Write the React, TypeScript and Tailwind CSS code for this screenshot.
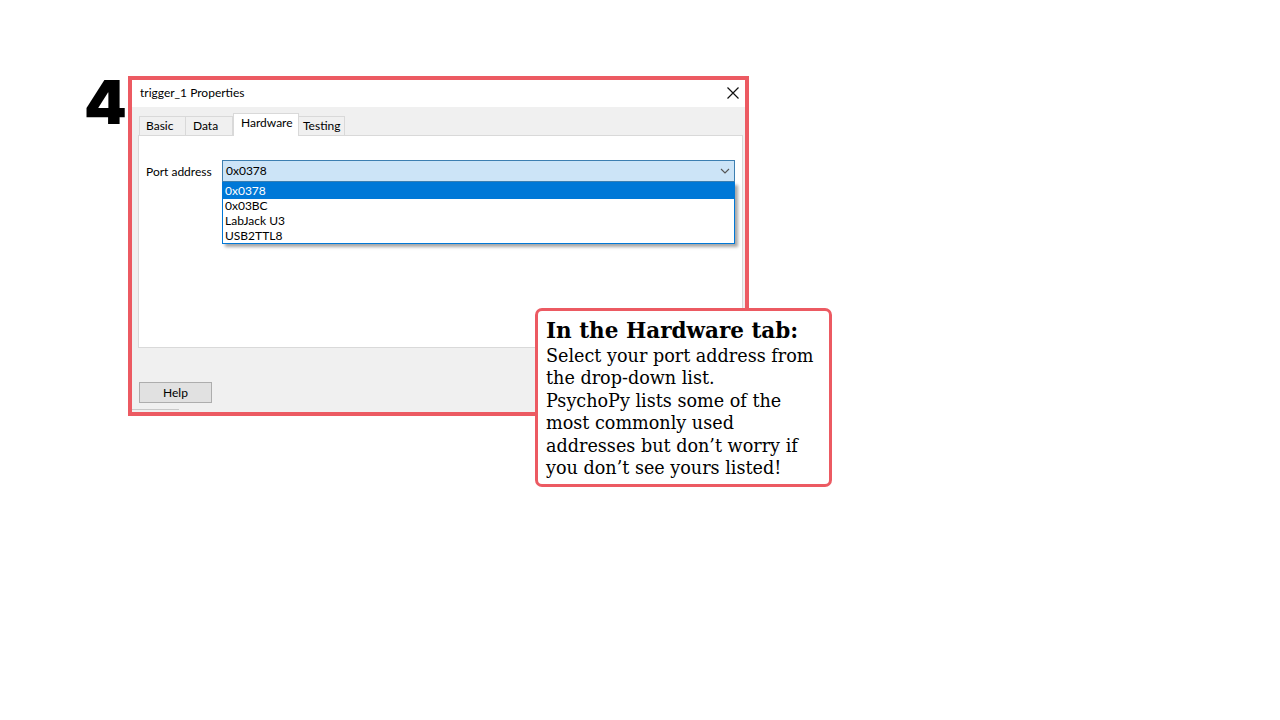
import React from "react";

const ui = { fontFamily: 'Lato, "Noto Sans", sans-serif' };
const slab = { fontFamily: '"DejaVu Serif", "Liberation Serif", serif' };

export default function App() {
  return (
    <div className="relative w-[1280px] h-[720px] bg-white overflow-hidden">
      <div className="flex items-start pl-[84px] pt-[76px]">
        <div
          className="w-[44px] -mt-[4px] text-[61px] leading-none font-black text-black"
          style={{ fontFamily: 'Inter, "DejaVu Sans", sans-serif' }}
        >
          4
        </div>
        <div className="w-[621px] h-[340px] border-[4px] border-[#ec5a62] flex flex-col" style={ui}>
          {/* title bar */}
          <div className="h-[27px] bg-white flex items-center justify-between pl-[8px] pr-[4px] shrink-0">
            <span className="text-[12px] text-black -mt-[2px]">trigger_1 Properties</span>
            <svg width="14" height="14" viewBox="0 0 14 14" className="mr-[1px] -mt-[2px]">
              <path d="M1.5 1.5 L12.5 12.5 M12.5 1.5 L1.5 12.5" stroke="#111" strokeWidth="1.2" />
            </svg>
          </div>
          {/* body */}
          <div className="flex-1 bg-[#f0f0f0] flex flex-col pl-[6px]">
            <div className="flex items-end h-[28px] pl-[1px] pt-[6px]">
              <div className="w-[47px] h-[19px] border border-b-0 border-[#d9d9d9] bg-[#f0f0f0] text-[12px] pl-[6px] leading-[17px]">Basic</div>
              <div className="w-[47px] h-[19px] border border-b-0 border-l-0 border-[#d9d9d9] bg-[#f0f0f0] text-[12px] pl-[7px] leading-[17px]">Data</div>
              <div className="relative z-10 w-[66px] h-[23px] -mb-[1px] border border-b-0 border-[#d9d9d9] bg-white text-[12px] pl-[7px] leading-[18px]">Hardware</div>
              <div className="w-[46px] h-[19px] border border-b-0 border-l-0 border-[#d9d9d9] bg-[#f0f0f0] text-[12px] pl-[4px] leading-[18px]">Testing</div>
            </div>
            <div className="relative h-[213px] mr-[2px] bg-white border border-[#d9d9d9]">
              <div className="flex items-start pt-[24px] pl-[7px]">
                <span className="w-[76px] text-[12px] pt-[3px]">Port address</span>
                <div className="relative w-[513px]">
                  <div className="h-[22px] bg-[#cce4f7] border border-[#3c7fb1] flex items-center justify-between pl-[3px] pr-[4px]">
                    <span className="text-[12px]">0x0378</span>
                    <svg width="10" height="6" viewBox="0 0 10 6">
                      <path d="M1 1 L5 5 L9 1" fill="none" stroke="#555" strokeWidth="1.1" />
                    </svg>
                  </div>
                  <div className="absolute left-0 top-[22px] w-[513px] bg-white border border-[#0078d7] shadow-[3px_3px_3px_rgba(0,0,0,0.35)] text-[12px]">
                    <div className="h-[16px] bg-[#0078d7] text-white pl-[2px] leading-[15px]">0x0378</div>
                    <div className="h-[15px] pl-[2px] leading-[13px]">0x03BC</div>
                    <div className="h-[15px] pl-[2px] leading-[13px]">LabJack U3</div>
                    <div className="h-[14px] pl-[2px] leading-[13px]">USB2TTL8</div>
                  </div>
                </div>
              </div>
            </div>
            <div className="flex-1 flex flex-col justify-end">
              <div className="w-[73px] h-[21px] mb-[6px] ml-[1px] bg-[#e1e1e1] border border-[#adadad] text-[12px] flex items-center justify-center">
                Help
              </div>
              <div className="w-[47px] h-[1px] -ml-[6px] mb-[2px] bg-[#c8c8c8]" />
            </div>
          </div>
        </div>
      </div>
      {/* callout */}
      <div
        className="absolute left-[535px] top-[308px] w-[297px] h-[179px] bg-white border-[3px] border-[#ec5a62] rounded-[7px] pl-[8px] pt-[6px] text-black"
        style={slab}
      >
        <div className="text-[21.5px] font-bold leading-[28px] whitespace-nowrap">In the Hardware tab:</div>
        <div className="text-[17.6px] leading-[22.4px] whitespace-nowrap">
          Select your port address from
          <br />
          the drop-down list.
          <br />
          PsychoPy lists some of the
          <br />
          most commonly used
          <br />
          addresses but don’t worry if
          <br />
          you don’t see yours listed!
        </div>
      </div>
    </div>
  );
}
